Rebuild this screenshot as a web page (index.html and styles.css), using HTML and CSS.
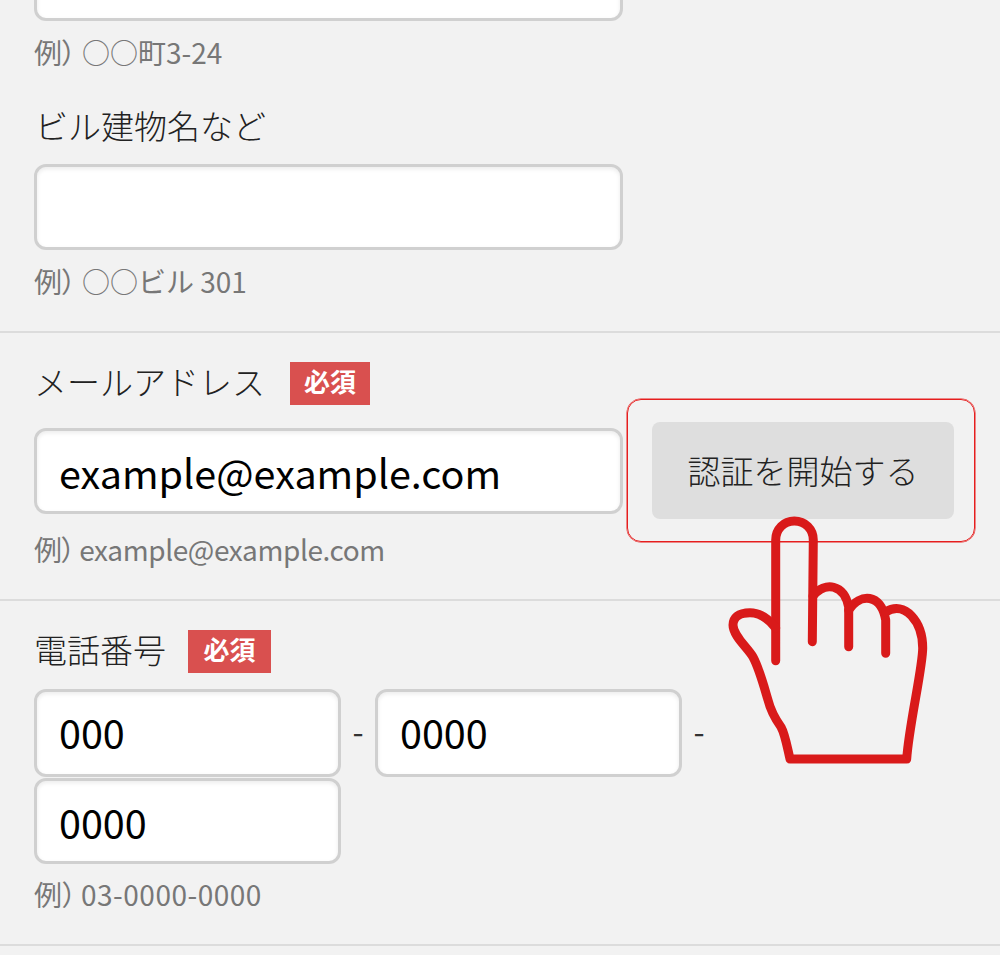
FILE: index.html
```html
<!DOCTYPE html>
<html lang="ja">
<head>
    <meta charset="UTF-8">
    <meta name="viewport" content="width=device-width, initial-scale=1.0">
    <title>会員登録フォーム</title>
    <link rel="stylesheet" href="styles.css">
</head>
<body>
    <div class="form">
        <section class="group group-address">
            <input class="field" type="text">
            <p class="hint"><span class="ex">例）</span>○○町3-24</p>
            <label class="label label-building">ビル建物名など</label>
            <input class="field" type="text">
            <p class="hint"><span class="ex">例）</span>○○ビル 301</p>
        </section>

        <section class="group group-mail">
            <div class="label-row">
                <label class="label">メールアドレス</label>
                <span class="required">必須</span>
            </div>
            <div class="mail-row">
                <input class="field" type="text" value="example@example.com">
                <div class="auth-box">
                    <button class="auth-btn" type="button">認証を開始する</button>
                </div>
            </div>
            <p class="hint"><span class="ex">例）</span>example@example.com</p>
        </section>

        <section class="group group-tel">
            <div class="label-row">
                <label class="label">電話番号</label>
                <span class="required">必須</span>
            </div>
            <div class="tel-row">
                <input class="field tel" type="text" value="000">
                <span class="dash">-</span>
                <input class="field tel" type="text" value="0000">
                <span class="dash">-</span>
                <input class="field tel tel-last" type="text" value="0000">
            </div>
            <p class="hint"><span class="ex">例）</span>03-0000-0000</p>
        </section>
    </div>

    <!-- pointing hand over the button -->
    <svg class="hand" viewBox="720 510 215 260" fill="none" stroke="#d91a1a" stroke-width="9" stroke-linecap="round" stroke-linejoin="round">
        <path d="M775.7 660.7V540C775.7 529 784 521 794.3 521C805 521 813.3 529 813.3 540L812.3 641.7"/>
        <path d="M813 596C825 581 844 584 848.7 607V646.7"/>
        <path d="M848.7 610C860 593 881 593 885.7 620V653.3"/>
        <path d="M885.7 612C905 600 922.7 622 922.7 648C922.7 668 909 725 906.7 759H790C787 746 785 734 781 727C776 720 771 712 768 700C763 683 759 668 753 657C748 648 733 636 733 625C733 618 738 612.7 750 612.7C760 612.7 768 618 775.7 628"/>
    </svg>
</body>
</html>
```
FILE: styles.css
```css
html, body {
    margin: 0;
    padding: 0;
}
body {
    height: 955px;
    overflow: hidden;
    position: relative;
    background-color: #f2f2f2;
    font-family: "Noto Sans CJK JP", "Noto Sans", sans-serif;
    color: #222;
}
.form {
    margin-top: -65px;
}
.group {
    padding: 0 34px;
    border-bottom: 2px solid #dcdcdc;
}
.group-address {
    height: 396px;
}
.group-mail {
    height: 266px;
}
.group-tel {
    height: 343px;
}
.label {
    display: block;
    font-size: 33px;
    line-height: 44px;
    font-weight: 300;
    color: #222;
}
.label-building {
    margin: 33px 0 17px 1px;
}
.label-row {
    display: flex;
    align-items: center;
    gap: 25px;
    padding-top: 26px;
    margin-bottom: 20px;
}
.label-row .label {
    margin-bottom: 5px;
}
.group-tel .label-row {
    margin-bottom: 13px;
}
.group-tel .required {
    width: 83px;
    margin-left: -3px;
}
.required {
    width: 80px;
    height: 43px;
    line-height: 38px;
    text-align: center;
    background-color: #d9504f;
    color: white;
    font-size: 26px;
    font-weight: 700;
}
.field {
    box-sizing: border-box;
    display: block;
    flex-shrink: 0;
    width: 589px;
    height: 86px;
    padding: 0 22px;
    background: white;
    border: 3px solid #d0d0d0;
    border-radius: 12px;
    box-shadow: inset 0 2px 4px rgba(0,0,0,0.08);
    font-family: inherit;
    font-size: 39.5px;
    font-weight: 400;
    color: #000;
    outline: none;
}
.hint {
    margin: 13px 0 0;
    font-size: 28px;
    line-height: 36px;
    font-weight: 400;
    color: #777;
}
.ex {
    font-feature-settings: "palt";
    margin-right: 4px;
}
.group-address .ex {
    margin-right: 6px;
}
.group-mail .hint {
    margin-top: 17px;
    letter-spacing: -0.4px;
}
.group-tel .hint {
    margin-top: 12px;
    letter-spacing: 0.5px;
}
.mail-row {
    display: flex;
    align-items: center;
    gap: 4px;
}
.auth-box {
    box-sizing: border-box;
    flex-shrink: 0;
    width: 348px;
    height: 143px;
    margin: -30px 0 -28px;
    padding-left: 4px;
    display: flex;
    align-items: center;
    justify-content: center;
    border: 1px solid #e61e1e;
    border-radius: 14px;
    box-shadow: 0 0 0 0.5px #e61e1e;
}
.auth-btn {
    flex-shrink: 0;
    width: 302px;
    height: 97px;
    border: none;
    border-radius: 8px;
    background-color: #dedede;
    font-family: inherit;
    font-size: 33px;
    font-weight: 300;
    color: #222;
}
.tel-row {
    display: flex;
    flex-wrap: wrap;
    align-items: center;
    width: 700px;
    row-gap: 1px;
}
.field.tel {
    width: 307px;
    height: 88px;
    padding-bottom: 3px;
}
.field.tel-last {
    height: 86px;
    padding-bottom: 0;
}
.dash {
    width: 34px;
    padding-bottom: 6px;
    text-align: center;
    font-size: 32px;
    line-height: 40px;
    color: #333;
}
.hand {
    position: absolute;
    left: 720px;
    top: 510px;
    width: 215px;
    height: 260px;
}
```
